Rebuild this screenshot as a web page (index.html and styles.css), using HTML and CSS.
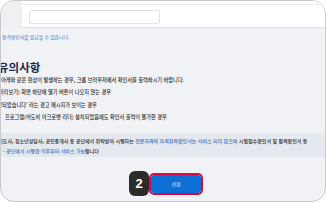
FILE: index.html
```html
<!DOCTYPE html>
<html lang="ko">
<head>
<meta charset="utf-8">
<link rel="stylesheet" href="styles.css">
</head>
<body>
<div class="frame">
  <div class="topbar">
    <div class="topbar-side"></div>
    <div class="topbar-main"><div class="input"></div></div>
  </div>
  <div class="content">
    <p class="info">합격확인서를 발급할 수 있습니다.</p>
    <h2 class="title">유의사항</h2>
    <ul class="list">
      <li class="l1">아래와 같은 현상이 발생하는 경우, 크롬 브라우저에서 확인서를 출력하시기 바랍니다.</li>
      <li class="l2">(미리보기) 화면 하단에 열기 버튼이 나오지 않는 경우</li>
      <li class="l3">'차단되었습니다' 라는 경고 메시지가 보이는 경우</li>
      <li class="l4">프로그램(어도비 아크로뱃 리더) 설치되었음에도 확인서 출력이 불가한 경우</li>
    </ul>
  </div>
  <div class="note">
    <p class="n1">경비지도사, 청소년상담사, 공인중개사 등 공단에서 위탁받아 시행하는 <span class="blue">전문자격의 자격취득확인서는 서비스 되지 않으며</span> 시험접수확인서 및 합격확인서 등</p>
    <p class="n2">· <span class="blue">공단에서 시행한 이후부터 서비스 가능</span>합니다</p>
  </div>
  <div class="actions">
    <span class="badge">2</span>
    <span class="btn-outline"><span class="btn">신청</span></span>
  </div>
</div>
</body>
</html>
```

FILE: styles.css
```css
html, body {
  margin: 0;
  padding: 0;
  background: #ffffff;
}
body {
  width: 326px;
  height: 203px;
  overflow: hidden;
  font-family: "Noto Sans CJK KR", "Noto Sans", sans-serif;
}
.frame {
  box-sizing: border-box;
  width: 326px;
  height: 202px;
  border: 1px solid #c9c9c9;
  border-radius: 14px;
  overflow: hidden;
  background: #f0f2f6;
  display: flex;
  flex-direction: column;
}
.topbar {
  height: 27px;
  display: flex;
  flex-shrink: 0;
}
.topbar-side {
  width: 21px;
  background: #eef0f4;
}
.topbar-main {
  flex: 1;
  background: #ffffff;
  border-top: 3px solid #ffffff;
  box-shadow: inset 0 1px 0 #efefef;
  border-bottom: 1px solid #e1e1e1;
  padding: 6px 0 0 7px;
  box-sizing: border-box;
}
.input {
  width: 131px;
  height: 14px;
  box-sizing: border-box;
  border: 1px solid #e2e2e2;
  border-radius: 2px;
  background: #fff;
}
.info {
  margin: 5px 0 0 1px;
  font-size: 4.8px;
  line-height: 8px;
  color: #3a78c8;
  white-space: nowrap;
}
.title {
  margin: 19px 0 0 -3px;
  font-size: 11.5px;
  line-height: 14px;
  font-weight: 700;
  color: #1c2a4c;
  white-space: nowrap;
}
.list {
  list-style: none;
  margin: 0;
  padding: 0;
  font-size: 5.2px;
  line-height: 12.3px;
  color: #2c2c2c;
  font-weight: 500;
}
.list li { white-space: nowrap; }
.l1 { margin-left: 0; }
.l2 { margin-left: -4px; }
.l3 { margin-left: -10px; }
.l4 { margin-left: 4px; }
.note {
  margin-top: 10px;
  background: #e4e8ef;
  padding: 3px 0 1px 0;
  font-size: 5px;
  line-height: 10px;
  color: #2c2c2c;
  font-weight: 500;
}
.note p {
  margin: 0;
  white-space: nowrap;
}
.n1 { margin-left: -12px !important; }
.n2 { margin-left: 2px !important; }
.blue { color: #3a78c8; }
.actions {
  display: flex;
  justify-content: center;
  align-items: center;
  margin-top: 14px;
  padding-left: 6px;
}
.badge {
  width: 20px;
  height: 25px;
  border-radius: 6px;
  background: #2b2b2b;
  color: #fff;
  font-family: "Liberation Sans", sans-serif;
  font-weight: 700;
  font-size: 13px;
  display: flex;
  align-items: center;
  justify-content: center;
}
.btn-outline {
  width: 54px;
  height: 22px;
  box-sizing: border-box;
  border: 2px solid #e2063e;
  border-radius: 5px;
  display: flex;
}
.btn {
  flex: 1;
  background: #0b6fd5;
  border-radius: 3px;
  color: #fff;
  font-size: 5px;
  display: flex;
  align-items: center;
  justify-content: center;
}
```
